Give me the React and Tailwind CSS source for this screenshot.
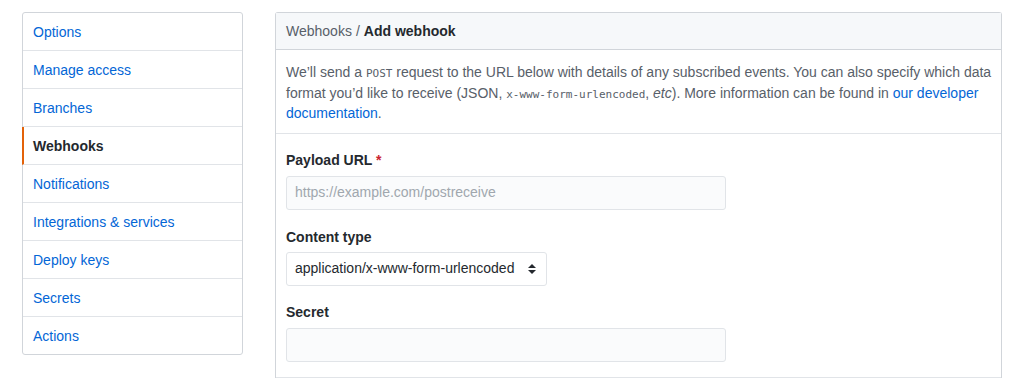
import React from "react";

const items = [
  "Options",
  "Manage access",
  "Branches",
  "Webhooks",
  "Notifications",
  "Integrations & services",
  "Deploy keys",
  "Secrets",
  "Actions",
];

const mono = { fontFamily: '"DejaVu Sans Mono", "Liberation Mono", monospace' };

export default function App() {
  return (
    <div
      className="flex items-start bg-white w-[1022px] h-[379px] overflow-hidden pt-[12px] pl-[22px] text-[14px] text-[#24292e]"
      style={{ fontFamily: '"Segoe UI", "Liberation Sans", Arial, sans-serif' }}
    >
      <nav className="w-[221px] shrink-0 border border-[#d1d5da] rounded-[3px] bg-white">
        {items.map((it, i) => {
          const active = it === "Webhooks";
          return (
            <div
              key={it}
              className={
                "flex items-center leading-none " +
                (i < items.length - 1 ? "h-[38px] border-b border-[#e1e4e8] " : "h-[37px] ") +
                (active
                  ? "border-l-[2px] border-l-[#e36209] pl-[9px] -ml-px font-bold text-[#24292e]"
                  : "pl-[10px] text-[#0366d6]")
              }
            >
              {it}
            </div>
          );
        })}
      </nav>
      <main className="ml-[32px] w-[727px] border border-[#d1d5da] border-b-0 rounded-t-[3px]">
        <div className="h-[37px] bg-[#f6f8fa] border-b border-[#d1d5da] flex items-center px-[10px]">
          <span className="text-[#586069]">Webhooks</span>
          <span className="text-[#586069] mx-[4px]">/</span>
          <span className="font-bold text-[#24292e]">Add webhook</span>
        </div>
        <div className="pl-[10px] pr-[2px] pt-[12px] pb-[9px] border-b border-[#e1e4e8] leading-[20.5px] text-[#586069] whitespace-nowrap">
          We’ll send a{" "}
          <code className="text-[11px] leading-none" style={mono}>POST</code>{" "}
          request to the URL below with details of any subscribed events. You can also specify which data
          <br />
          format you’d like to receive (JSON,{" "}
          <code className="text-[11px] leading-none" style={mono}>x-www-form-urlencoded</code>,{" "}
          <em>etc</em>). More information can be found in{" "}
          <a className="text-[#0366d6]">our developer</a>
          <br />
          <a className="text-[#0366d6]">documentation</a>.
        </div>
        <div className="px-[10px] pt-[16px] pb-[15px]">
          <label className="block font-bold leading-[20px] h-[20px]">
            Payload URL <span className="text-[#cb2431]">*</span>
          </label>
          <div className="mt-[6px] w-[440px] h-[34px] border border-[#e1e4e8] rounded-[3px] bg-[#fafbfc] flex items-center px-[8px] text-[#a0a7ae]">
            https://example.com/postreceive
          </div>
          <label className="block font-bold leading-[20px] h-[20px] mt-[17px]">Content type</label>
          <div className="mt-[5px] w-[261px] h-[34px] border border-[#e1e4e8] rounded-[3px] bg-white flex items-center pl-[8px] pr-[10px] text-[#24292e]">
            <span className="flex-1 whitespace-nowrap overflow-hidden">application/x-www-form-urlencoded</span>
            <svg width="8" height="10" viewBox="0 0 8 10" className="ml-[6px] shrink-0">
              <path d="M4 0 L8 4 L0 4 Z" fill="#24292e" />
              <path d="M4 10 L8 6 L0 6 Z" fill="#24292e" />
            </svg>
          </div>
          <label className="block font-bold leading-[20px] h-[20px] mt-[16px]">Secret</label>
          <div className="mt-[6px] w-[440px] h-[34px] border border-[#e1e4e8] rounded-[3px] bg-[#fafbfc]" />
        </div>
        <div className="border-b border-[#e1e4e8]" />
      </main>
    </div>
  );
}
